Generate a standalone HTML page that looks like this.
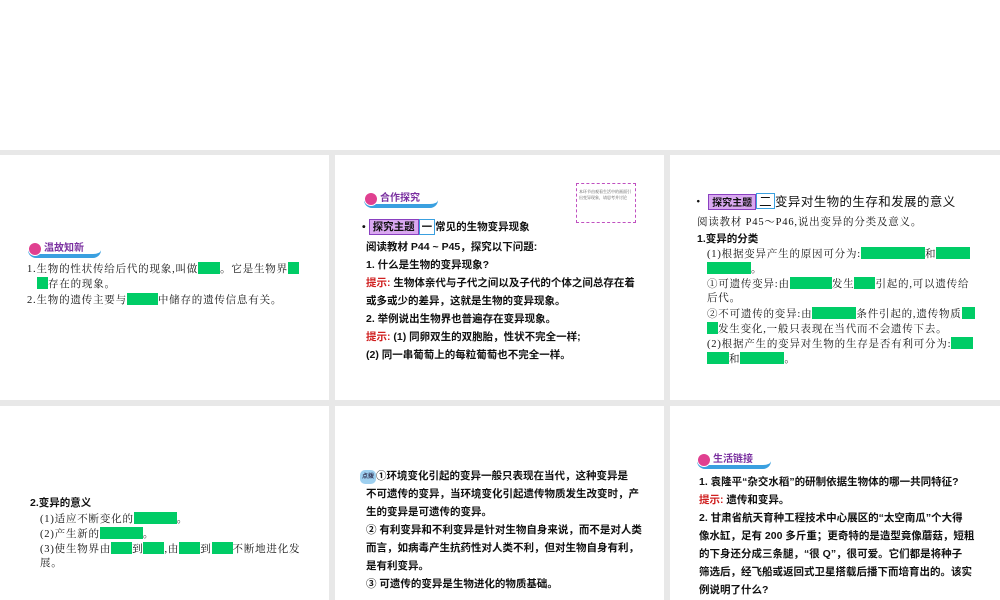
<!DOCTYPE html>
<html><head><meta charset="utf-8"><style>
body{margin:0;width:1000px;height:600px;background:#fff;position:relative;overflow:hidden;font-family:"Liberation Serif","Noto Serif CJK SC",serif;color:#111}
.g{position:absolute;background:#e8e8e8}
.p{position:absolute;background:#fff}
.t{position:absolute;white-space:nowrap;font-size:10.5px;line-height:14px;letter-spacing:0.8px}
.b{font-weight:bold;font-family:"Liberation Sans","Noto Sans CJK SC",sans-serif;letter-spacing:0}
.gr{display:inline-block;background:#00cc66;height:12px;vertical-align:-2px}
.red{color:#d02020;font-weight:bold}
.hd{position:absolute;height:14px;border-bottom:4px solid #3aa0e0;border-radius:0 0 8px 8px;font-size:10px;font-weight:bold;color:#7a30a0;font-family:"Noto Sans CJK SC",sans-serif}
.hd i{position:absolute;left:0;top:2px;width:12px;height:12px;border-radius:50%;background:#e04090;border:1px solid #fff}
.hd span{position:absolute;left:16px;top:-1px}
.tag{display:inline-block;background:#d9a8f0;border:1px solid #8a40c0;padding:0 3px;font-weight:bold;font-family:"Noto Sans CJK SC",sans-serif;letter-spacing:0}
.box{display:inline-block;border:1px solid #3aa0e0;padding:0 2px;font-family:"Noto Sans CJK SC",sans-serif}
</style></head><body>
<div class="g" style="left:0;top:150px;width:1000px;height:450px"></div>
<div class="p" style="left:0;top:155px;width:329px;height:245px"></div>
<div class="p" style="left:335px;top:155px;width:329px;height:245px"></div>
<div class="p" style="left:670px;top:155px;width:330px;height:245px"></div>
<div class="p" style="left:0;top:406px;width:329px;height:194px"></div>
<div class="p" style="left:335px;top:406px;width:329px;height:194px"></div>
<div class="p" style="left:670px;top:406px;width:330px;height:194px"></div>

<!-- panel1 -->
<div class="hd" style="left:28px;top:240px;width:73px"><i></i><span>温故知新</span></div>
<div class="t" style="left:27px;top:262px">1.生物的性状传给后代的现象,叫做<span class="gr" style="width:22px"></span>。它是生物界<span class="gr" style="width:11px"></span></div>
<div class="t" style="left:37px;top:277px"><span class="gr" style="width:11px"></span>存在的现象。</div>
<div class="t" style="left:27px;top:293px">2.生物的遗传主要与<span class="gr" style="width:31px"></span>中储存的遗传信息有关。</div>

<!-- panel2 -->
<div class="hd" style="left:364px;top:190px;width:74px"><i></i><span>合作探究</span></div>
<div style="position:absolute;left:576px;top:183px;width:60px;height:40px;border:1px dashed #c050c0;font-size:4px;line-height:6px;color:#555;padding:5px 2px 0;box-sizing:border-box">本环节由观看生活中的画面引出变异现象，请思考并讨论</div>
<div class="t b" style="left:362px;top:219px;font-size:10.5px">• <span class="tag">探究主题</span><span class="box">一</span>常见的生物变异现象</div>
<div class="t b" style="left:366px;top:240px">阅读教材 P44 ~ P45，探究以下问题:</div>
<div class="t b" style="left:366px;top:258px">1. 什么是生物的变异现象?</div>
<div class="t b" style="left:366px;top:276px"><span class="red">提示:</span> 生物体亲代与子代之间以及子代的个体之间总存在着</div>
<div class="t b" style="left:366px;top:294px">或多或少的差异，这就是生物的变异现象。</div>
<div class="t b" style="left:366px;top:312px">2. 举例说出生物界也普遍存在变异现象。</div>
<div class="t b" style="left:366px;top:330px"><span class="red">提示:</span>  (1) 同卵双生的双胞胎，性状不完全一样;</div>
<div class="t b" style="left:366px;top:348px"> (2) 同一串葡萄上的每粒葡萄也不完全一样。</div>

<!-- panel3 -->
<div class="t" style="left:692px;top:193px;font-size:12.5px;letter-spacing:0.4px;font-family:'Noto Sans CJK SC',sans-serif">• <span class="tag" style="font-size:10px">探究主题</span><span class="box">二</span>变异对生物的生存和发展的意义</div>
<div class="t" style="left:697px;top:216px">阅读教材 P45～P46,说出变异的分类及意义。</div>
<div class="t b" style="left:697px;top:232px">1.变异的分类</div>
<div class="t" style="left:707px;top:247px">(1)根据变异产生的原因可分为:<span class="gr" style="width:64px"></span>和<span class="gr" style="width:34px"></span></div>
<div class="t" style="left:707px;top:262px"><span class="gr" style="width:44px"></span>。</div>
<div class="t" style="left:707px;top:277px">①可遗传变异:由<span class="gr" style="width:42px"></span>发生<span class="gr" style="width:21px"></span>引起的,可以遗传给</div>
<div class="t" style="left:707px;top:292px">后代。</div>
<div class="t" style="left:707px;top:307px">②不可遗传的变异:由<span class="gr" style="width:44px"></span>条件引起的,遗传物质<span class="gr" style="width:13px"></span></div>
<div class="t" style="left:707px;top:322px"><span class="gr" style="width:11px"></span>发生变化,一般只表现在当代而不会遗传下去。</div>
<div class="t" style="left:707px;top:337px">(2)根据产生的变异对生物的生存是否有利可分为:<span class="gr" style="width:22px"></span></div>
<div class="t" style="left:707px;top:352px"><span class="gr" style="width:22px"></span>和<span class="gr" style="width:44px"></span>。</div>

<!-- panel4 -->
<div class="t b" style="left:30px;top:496px">2.变异的意义</div>
<div class="t" style="left:40px;top:512px">(1)适应不断变化的<span class="gr" style="width:43px"></span>。</div>
<div class="t" style="left:40px;top:527px">(2)产生新的<span class="gr" style="width:43px"></span>。</div>
<div class="t" style="left:40px;top:542px">(3)使生物界由<span class="gr" style="width:21px"></span>到<span class="gr" style="width:21px"></span>,由<span class="gr" style="width:21px"></span>到<span class="gr" style="width:21px"></span>不断地进化发</div>
<div class="t" style="left:40px;top:557px">展。</div>

<!-- panel5 -->
<div class="t b" style="left:360px;top:469px"><span style="display:inline-block;background:#9ed0f0;border-radius:5px;font-size:6px;padding:0 2px;color:#335;vertical-align:1px">点拨</span>①环境变化引起的变异一般只表现在当代，这种变异是</div>
<div class="t b" style="left:366px;top:487px">不可遗传的变异，当环境变化引起遗传物质发生改变时，产</div>
<div class="t b" style="left:366px;top:505px">生的变异是可遗传的变异。</div>
<div class="t b" style="left:366px;top:523px">② 有利变异和不利变异是针对生物自身来说，而不是对人类</div>
<div class="t b" style="left:366px;top:541px">而言，如病毒产生抗药性对人类不利，但对生物自身有利，</div>
<div class="t b" style="left:366px;top:559px">是有利变异。</div>
<div class="t b" style="left:366px;top:577px">③ 可遗传的变异是生物进化的物质基础。</div>

<!-- panel6 -->
<div class="hd" style="left:697px;top:451px;width:74px"><i></i><span>生活链接</span></div>
<div class="t b" style="left:699px;top:475px">1. 袁隆平“杂交水稻”的研制依据生物体的哪一共同特征?</div>
<div class="t b" style="left:699px;top:493px"><span class="red">提示:</span> 遗传和变异。</div>
<div class="t b" style="left:699px;top:511px">2. 甘肃省航天育种工程技术中心展区的“太空南瓜”个大得</div>
<div class="t b" style="left:699px;top:529px">像水缸，足有 200 多斤重；更奇特的是造型竟像蘑菇，短粗</div>
<div class="t b" style="left:699px;top:547px">的下身还分成三条腿，“很 Q”，很可爱。它们都是将种子</div>
<div class="t b" style="left:699px;top:565px">筛选后，经飞船或返回式卫星搭载后播下而培育出的。该实</div>
<div class="t b" style="left:699px;top:583px">例说明了什么?</div>
</body></html>
